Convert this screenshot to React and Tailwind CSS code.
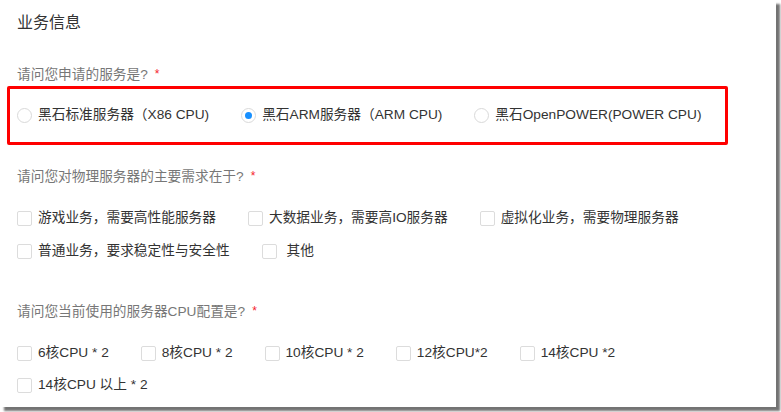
import React from 'react';

const font = "font-['Liberation_Sans','Noto_Sans_CJK_SC',sans-serif]";

function Question({ text }) {
  return (
    <div className="h-[22px] leading-[22px] text-[13.7px] text-[#777] flex items-center whitespace-nowrap">
      <span>{text}</span>
      <span className="ml-[7px] text-[12px] text-[#f5222d] -mt-[3px]">*</span>
    </div>
  );
}

function Radio({ label, checked }) {
  return (
    <div className="flex items-center shrink-0 mr-[32px]">
      <span className="w-[15px] h-[15px] rounded-full border border-[#d9d9d9] bg-white flex items-center justify-center">
        {checked && <span className="w-[7px] h-[7px] rounded-full bg-[#1890ff]" />}
      </span>
      <span className="ml-[6px] text-[13.7px] text-[#333] whitespace-nowrap">{label}</span>
    </div>
  );
}

function Check({ label, h = 'h-[33px]' }) {
  return (
    <div className={`flex items-center shrink-0 mr-[32px] ${h}`}>
      <span className="w-[15px] h-[15px] rounded-[2px] border border-[#dcdcdc] bg-white" />
      <span className="ml-[6px] text-[13.7px] text-[#333] whitespace-pre">{label}</span>
    </div>
  );
}

export default function App() {
  const services = [
    { label: '黑石标准服务器（X86 CPU)', checked: false },
    { label: '黑石ARM服务器（ARM CPU)', checked: true },
    { label: '黑石OpenPOWER(POWER CPU)', checked: false },
  ];

  const needs = [
    '游戏业务，需要高性能服务器',
    '大数据业务，需要高IO服务器',
    '虚拟化业务，需要物理服务器',
    '普通业务，要求稳定性与安全性',
    ' 其他',
  ];

  const cpus = ['6核CPU * 2', '8核CPU * 2', '10核CPU * 2', '12核CPU*2', '14核CPU *2', '14核CPU 以上 * 2'];

  return (
    <div className={`w-[781px] h-[412px] bg-white overflow-hidden ${font}`}>
      <div className="w-[776px] h-[407px] bg-white shadow-[4px_4px_2px_rgba(0,0,0,0.55)] px-[7px]">
        {/* Title */}
        <div className="h-[46px] leading-[46px] px-[10px] text-[16px] text-[#333]">业务信息</div>

        {/* Q1 */}
        <div className="mt-[18px] px-[10px]">
          <Question text="请问您申请的服务是?" />
        </div>
        <div className="w-[721px] h-[59px] border-[3px] border-[#ff0000] rounded-[2px] pl-[7px] flex items-center">
          {services.map(s => (
            <Radio key={s.label} label={s.label} checked={s.checked} />
          ))}
        </div>

        {/* Q2 */}
        <div className="mt-[21px] px-[10px] w-[731px]">
          <Question text="请问您对物理服务器的主要需求在于?" />
          <div className="mt-[14px] flex flex-wrap">
            {needs.map(n => (
              <Check key={n} label={n} />
            ))}
          </div>
        </div>

        {/* Q3 */}
        <div className="mt-[33px] px-[10px] w-[731px]">
          <Question text="请问您当前使用的服务器CPU配置是?" />
          <div className="mt-[14px] flex flex-wrap">
            {cpus.map(c => (
              <Check key={c} label={c} h="h-[32px]" />
            ))}
          </div>
        </div>
      </div>
    </div>
  );
}
